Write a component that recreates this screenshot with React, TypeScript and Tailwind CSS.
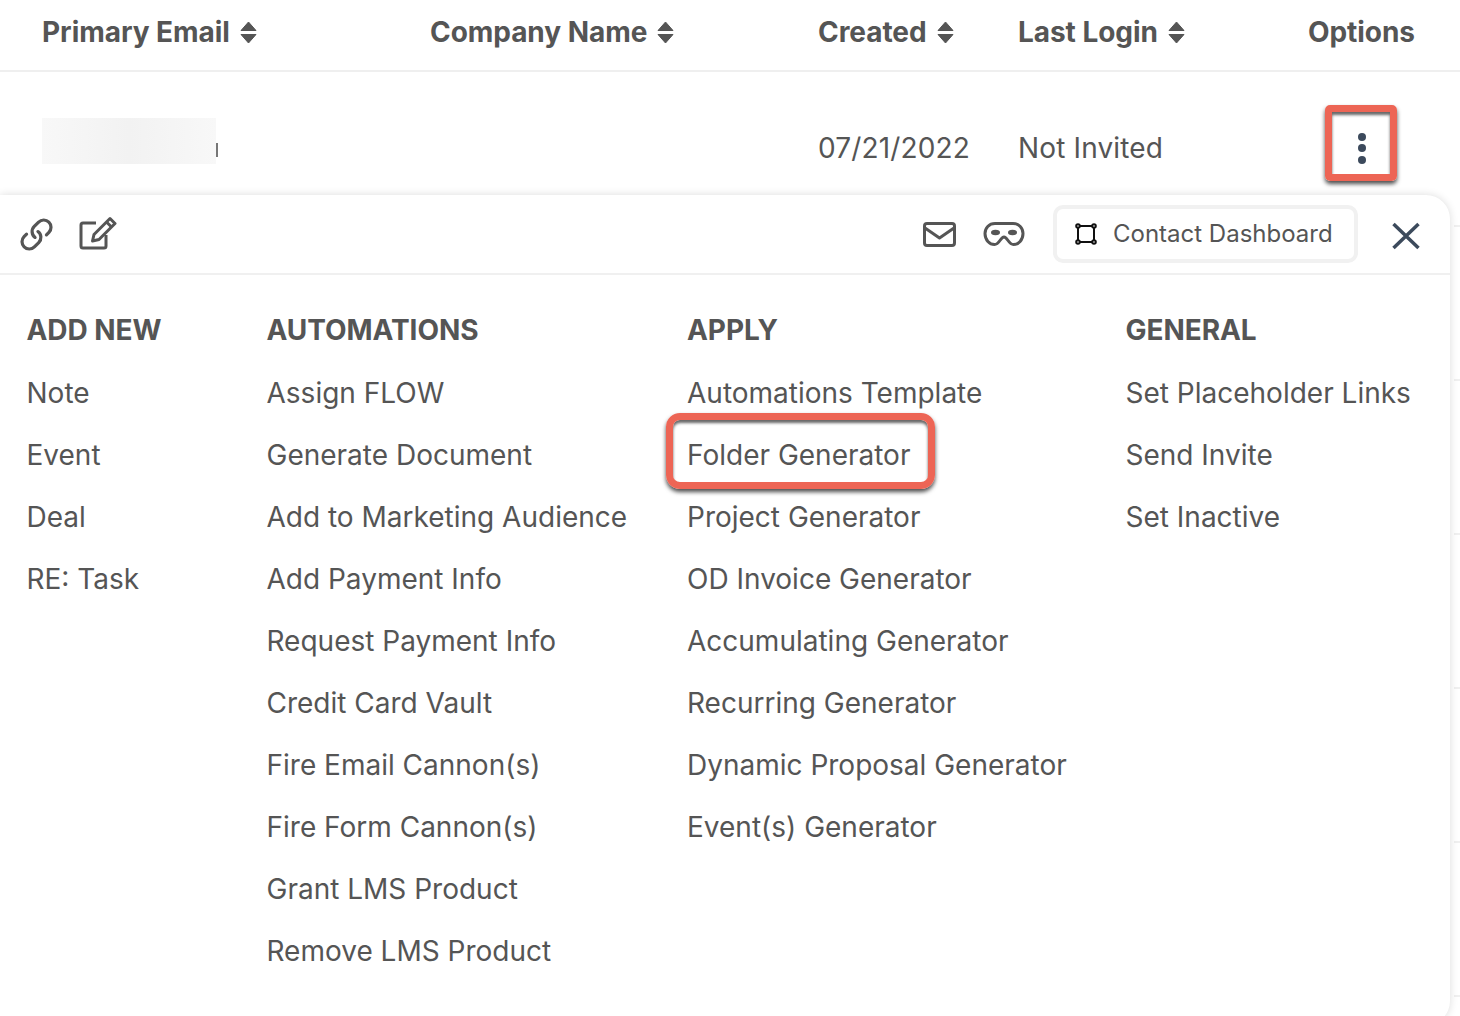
import React from 'react';
import { Link } from 'lucide-react';

const FONT = "font-['Inter','Noto_Sans',sans-serif]";

const COLUMNS = [
  { title: 'ADD NEW', width: 'w-[240px]', items: ['Note', 'Event', 'Deal', 'RE: Task'] },
  {
    title: 'AUTOMATIONS',
    width: 'w-[420.5px]',
    items: [
      'Assign FLOW',
      'Generate Document',
      'Add to Marketing Audience',
      'Add Payment Info',
      'Request Payment Info',
      'Credit Card Vault',
      'Fire Email Cannon(s)',
      'Fire Form Cannon(s)',
      'Grant LMS Product',
      'Remove LMS Product',
    ],
  },
  {
    title: 'APPLY',
    width: 'w-[438.5px]',
    items: [
      'Automations Template',
      'Folder Generator',
      'Project Generator',
      'OD Invoice Generator',
      'Accumulating Generator',
      'Recurring Generator',
      'Dynamic Proposal Generator',
      'Event(s) Generator',
    ],
  },
  { title: 'GENERAL', width: 'w-[300px]', items: ['Set Placeholder Links', 'Send Invite', 'Set Inactive'] },
];

const SortIcon = () => (
  <svg width="17" height="23" viewBox="0 0 17 23" className="ml-[10px] mt-[1px]">
    <path d="M8.5 1 L16 9.5 H1 Z M1 13.5 H16 L8.5 22 Z" fill="#555" stroke="#555" strokeWidth="1" strokeLinejoin="round" />
  </svg>
);

const EditIcon = () => (
  <svg width="38" height="34" viewBox="0 0 38 34" fill="none" stroke="#555" strokeWidth="3" strokeLinejoin="round">
    <path d="M17 7 H4 C2.8 7 2 7.8 2 9 V30 C2 31.2 2.8 32 4 32 H25 C26.2 32 27 31.2 27 30 V19" />
    <path d="M31 2.5 L36 7.5 L20 23.5 L13.5 25 L15 18.5 Z" />
    <path d="M27.5 6 L32.5 11" />
  </svg>
);

const MailIcon = () => (
  <svg width="33" height="25" viewBox="0 0 33 25" fill="none" stroke="#555" strokeWidth="3" strokeLinejoin="round">
    <rect x="1.5" y="1.5" width="30" height="22" rx="2.5" />
    <path d="M2 6 L16.5 16 L31 6" />
  </svg>
);

const MaskIcon = () => (
  <svg width="42" height="26" viewBox="0 0 42 26" fill="none">
    <path
      d="M12 2.5 H30 C36 2.5 40 7 40 12.5 C40 19 35.5 23.5 30.5 23.5 C25.5 23.5 24.5 16 21 16 C17.5 16 16.5 23.5 11.5 23.5 C6.5 23.5 2 19 2 12.5 C2 7 6 2.5 12 2.5 Z"
      stroke="#555"
      strokeWidth="3"
    />
    <ellipse cx="12.5" cy="11.5" rx="4.5" ry="2.8" fill="#555" />
    <ellipse cx="29.5" cy="11.5" rx="4.5" ry="2.8" fill="#555" />
  </svg>
);

const VectorSquareIcon = () => (
  <svg width="22" height="22" viewBox="0 0 22 22" fill="none" stroke="#111" strokeWidth="2">
    <rect x="3" y="3" width="16" height="16" />
    <circle cx="3" cy="3" r="1.8" fill="#fff" />
    <circle cx="19" cy="3" r="1.8" fill="#fff" />
    <circle cx="3" cy="19" r="1.8" fill="#fff" />
    <circle cx="19" cy="19" r="1.8" fill="#fff" />
  </svg>
);

const CloseIcon = () => (
  <svg width="30" height="30" viewBox="0 0 30 30" fill="none" stroke="#3c4a5c" strokeWidth="3.5">
    <path d="M2.5 3 L27.5 27 M27.5 3 L2.5 27" />
  </svg>
);

const HeaderCell = ({ label, sortable = true }: { label: string; sortable?: boolean }) => (
  <div className="flex items-center text-[28px] font-bold tracking-[-0.05px] text-[#555]">
    {label}
    {sortable && <SortIcon />}
  </div>
);

export default function App() {
  return (
    <div className={`${FONT} relative h-[1016px] w-[1460px] overflow-hidden bg-white`}>
      {/* Table header */}
      <div className="grid h-[72px] grid-cols-[388px_388px_200px_290px_1fr] items-center border-b-2 border-[#efefef] pb-[7px] pl-[42px]">
        <HeaderCell label="Primary Email" />
        <HeaderCell label="Company Name" />
        <HeaderCell label="Created" />
        <HeaderCell label="Last Login" />
        <HeaderCell label="Options" sortable={false} />
      </div>

      {/* Table row */}
      <div className="grid h-[152px] grid-cols-[388px_388px_200px_290px_1fr] items-center pl-[42px] text-[28px] text-[#555]">
        <div className="relative h-[46px] w-[174px] -translate-y-[7px] bg-gradient-to-r from-[#f8f8f8] via-[#f2f2f2] to-[#f8f8f8]">
          <span className="absolute left-[174px] top-[25px] h-[14px] w-[2px] bg-[#777]" />
        </div>
        <div />
        <div className="tracking-[0.15px]">07/21/2022</div>
        <div className="tracking-[0.15px]">Not Invited</div>
        <div className="flex w-[108px] flex-col items-center gap-[3.5px]">
          <span className="h-[8px] w-[8px] rounded-full bg-[#3c4a5c]" />
          <span className="h-[8px] w-[8px] rounded-full bg-[#3c4a5c]" />
          <span className="h-[8px] w-[8px] rounded-full bg-[#3c4a5c]" />
        </div>
      </div>

      {/* Row separators peeking out behind the popup */}
      <div className="absolute left-[1454px] top-[225px] flex w-[6px] flex-col gap-[152px]">
        {[0, 1, 2, 3, 4, 5].map((i) => (
          <span key={i} className="h-[2px] w-full bg-[#f0f0f0]" />
        ))}
      </div>

      {/* Actions popup */}
      <div className="absolute left-0 top-[195px] h-[830px] w-[1450px] rounded-tr-[24px] rounded-br-[24px] bg-white shadow-[0_0_8px_rgba(0,0,0,0.14)]">
        <div className="flex h-[80px] items-center border-b-2 border-[#f0f0f0] pl-[19px]">
          <Link size={35} color="#555" strokeWidth={2.2} className="-scale-x-100 rotate-90" />
          <span className="ml-[25px] flex -translate-y-[1px]">
            <EditIcon />
          </span>
          <span className="ml-[806px] flex">
            <MailIcon />
          </span>
          <span className="ml-[27px] flex">
            <MaskIcon />
          </span>
          <div className="ml-[28px] flex h-[58px] w-[305px] items-center rounded-[10px] border-[4px] border-[#f1f1f1] pl-[18px] text-[24px] whitespace-nowrap text-[#555]">
            <VectorSquareIcon />
            <span className="ml-[16px]">Contact Dashboard</span>
          </div>
          <span className="ml-[33px] mt-[4px] flex">
            <CloseIcon />
          </span>
        </div>

        <div className="flex pl-[26.5px] pt-[40px] text-[#555]">
          {COLUMNS.map((col) => (
            <div key={col.title} className={`${col.width} flex flex-col`}>
              <div className="h-[31px] text-[28px] font-bold leading-[31px] tracking-[-0.05px]">{col.title}</div>
              <div className="mt-[16px] flex flex-col">
                {col.items.map((item) => (
                  <div key={item} className="h-[62px] text-[28px] leading-[62px]">
                    {item}
                  </div>
                ))}
              </div>
            </div>
          ))}
        </div>
      </div>

      {/* Annotation: options button */}
      <div className="absolute left-[1325px] top-[105px] h-[76px] w-[72px] rounded-[5px] border-[7px] border-[#ed6555] shadow-[0_3px_4px_rgba(0,0,0,0.7),inset_0_3px_3px_rgba(0,0,0,0.6)]" />
      {/* Annotation: folder generator */}
      <div className="absolute left-[666px] top-[413px] h-[76px] w-[269px] rounded-[14px] border-[7px] border-[#ed6555] shadow-[0_3px_4px_rgba(0,0,0,0.7),inset_0_3px_3px_rgba(0,0,0,0.6)]" />
    </div>
  );
}
